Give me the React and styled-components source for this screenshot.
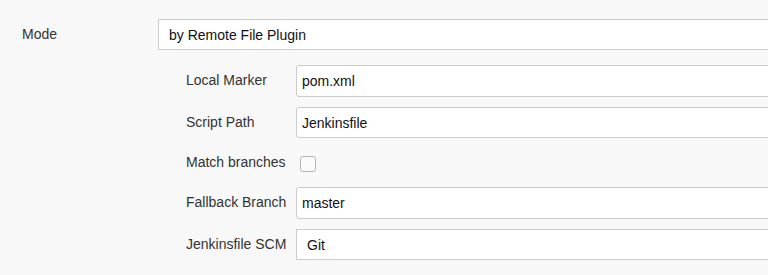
import React from 'react'
import styled, { createGlobalStyle } from 'styled-components'

const GlobalStyle = createGlobalStyle`
    html, body {
        margin : 0;
        padding : 0;
        background : #f8f8f8;
        overflow : hidden;
    }
    body {
        font-family : "Liberation Sans", Arial, sans-serif;
        font-size : 14px;
        color : #333;
    }
`

const fields = [
    { label : 'Local Marker', kind : 'text', value : 'pom.xml' },
    { label : 'Script Path', kind : 'text', value : 'Jenkinsfile', short : true },
    { label : 'Match branches', kind : 'check' },
    { label : 'Fallback Branch', kind : 'text', value : 'master' },
    { label : 'Jenkinsfile SCM', kind : 'select', value : 'Git' },
]

function App() {
    return (
        <Page>
            <GlobalStyle />
            <Row labelWidth={136}>
                <Label>Mode</Label>
                <Select>by Remote File Plugin</Select>
            </Row>

            <Nested>
                {fields.map(f => (
                    <Row key={f.label} labelWidth={110} height={f.kind === 'check' ? 29 : 'auto'}>
                        <Label>{f.label}</Label>
                        {f.kind === 'text' && <TextBox short={f.short}>{f.value}</TextBox>}
                        {f.kind === 'select' && <Select>{f.value}</Select>}
                        {f.kind === 'check' && <Check />}
                    </Row>
                ))}
            </Nested>
        </Page>
    )
}

export default App

const Page = styled.div`
    width : 1000px;
    padding : 19px 0 0 22px;
    display : flex;
    flex-direction : column;
`

const Row = styled.div`
    display : grid;
    grid-template-columns : ${props => props.labelWidth}px 1fr;
    align-items : center;
    height : ${props => props.height === undefined || props.height === 'auto' ? 'auto' : props.height + 'px'};
`

const Label = styled.div`
    color : #333;
    white-space : nowrap;
    padding-bottom : 2px;
`

const Nested = styled.div`
    margin : 15px 0 0 164px;
    display : flex;
    flex-direction : column;
    gap : 10px;
`

const Field = styled.div`
    box-sizing : border-box;
    height : 31px;
    display : flex;
    align-items : center;
    background : #fff;
    border : 1px solid #ccc;
    color : #111;
`

const Select = styled(Field)`
    padding-left : 10px;
    border-radius : 0;
`

const TextBox = styled(Field)`
    height : ${props => props.short ? 31 : 32}px;
    padding-left : 5px;
    border-radius : 3px;
`

const Check = styled.span`
    box-sizing : border-box;
    margin : 2px 0 0 4px;
    width : 16px;
    height : 16px;
    border : 1px solid #b4b4b4;
    border-radius : 3px;
    background : #fafafa;
`
